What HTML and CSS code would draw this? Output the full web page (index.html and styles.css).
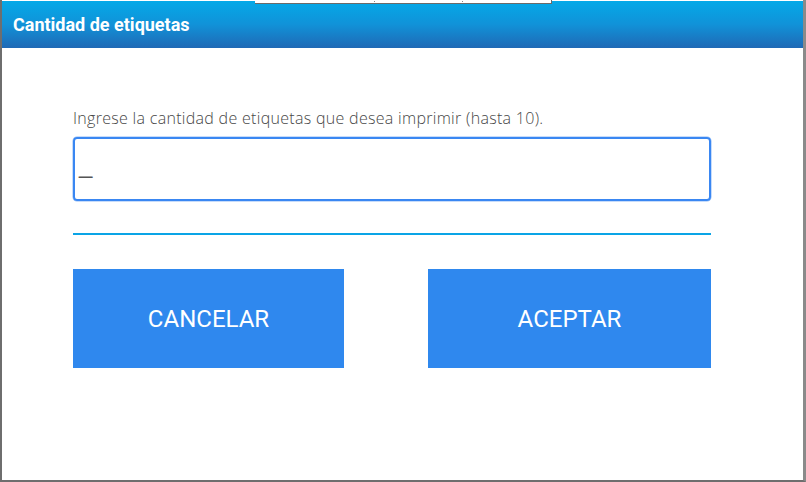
FILE: index.html
```html
<!DOCTYPE html>
<html lang="es">
<head>
<meta charset="utf-8">
<title>Cantidad de etiquetas</title>
<link rel="stylesheet" href="styles.css">
</head>
<body>
<div class="window">
  <div class="tabstrip"><span class="tick t1"></span><span class="tick t2"></span></div>
  <header class="titlebar">Cantidad de etiquetas</header>
  <main class="content">
    <label class="prompt" for="qty">Ingrese la cantidad de etiquetas que desea imprimir (hasta 10).</label>
    <div class="field" id="qty"><span class="cursor">_</span></div>
    <div class="rule"></div>
    <div class="actions">
      <button class="btn">CANCELAR</button>
      <button class="btn">ACEPTAR</button>
    </div>
  </main>
</div>
</body>
</html>
```
FILE: styles.css
```css
html, body {
  margin: 0;
  padding: 0;
  background: #ffffff;
}
.window {
  position: relative;
  width: 806px;
  height: 482px;
  box-sizing: border-box;
  border-left: 2px solid #6e6e6e;
  border-right: 3px solid #8a8a8a;
  border-bottom: 2px solid #6e6e6e;
  background: #ffffff;
  display: flex;
  flex-direction: column;
}
.tabstrip {
  position: absolute;
  top: 0;
  left: 253px;
  width: 296px;
  height: 3px;
  background: #ffffff;
  border-bottom: 1px solid #6a6a6a;
  border-right: 1px solid #6a6a6a;
  z-index: 2;
}
.tick {
  position: absolute;
  top: 1px;
  width: 1px;
  height: 1px;
  background: #888;
}
.t1 { left: 119px; }
.t2 { left: 207px; }
.titlebar {
  margin-top: 1px;
  height: 47px;
  box-sizing: border-box;
  padding-left: 11px;
  display: flex;
  align-items: center;
  background: linear-gradient(to bottom, #04a9e8 0%, #1192d8 50%, #1f69b5 100%);
  color: #ffffff;
  font-family: Roboto, "Liberation Sans", sans-serif;
  font-weight: 700;
  font-size: 18px;
}
.content {
  padding: 60px 0 0 71px;
  width: 638px;
  display: flex;
  flex-direction: column;
}
.prompt {
  font-family: "Open Sans", "Noto Sans", sans-serif;
  font-weight: 300;
  font-size: 16px;
  color: #474747;
  line-height: 21px;
  letter-spacing: 0.3px;
}
.field {
  margin-top: 8px;
  height: 64px;
  box-sizing: border-box;
  border: 2px solid #3a87f2;
  border-radius: 4px;
  box-shadow: 0 0 0 0.5px #8fbaf6;
  display: flex;
  align-items: flex-end;
  padding: 0 0 26px 4px;
  font-family: "Liberation Sans", sans-serif;
  font-size: 24px;
  color: #555;
}
.cursor {
  line-height: 16px;
}
.rule {
  margin-top: 32px;
  height: 2px;
  background: #0aa4e6;
}
.actions {
  margin-top: 34px;
  display: grid;
  grid-template-columns: 271px 283px;
  justify-content: space-between;
}
.btn {
  height: 99px;
  border: none;
  margin: 0;
  padding: 0;
  background: #2f88ee;
  color: #ffffff;
  font-family: Roboto, "Liberation Sans", sans-serif;
  font-size: 24px;
  font-weight: 400;
}
```
